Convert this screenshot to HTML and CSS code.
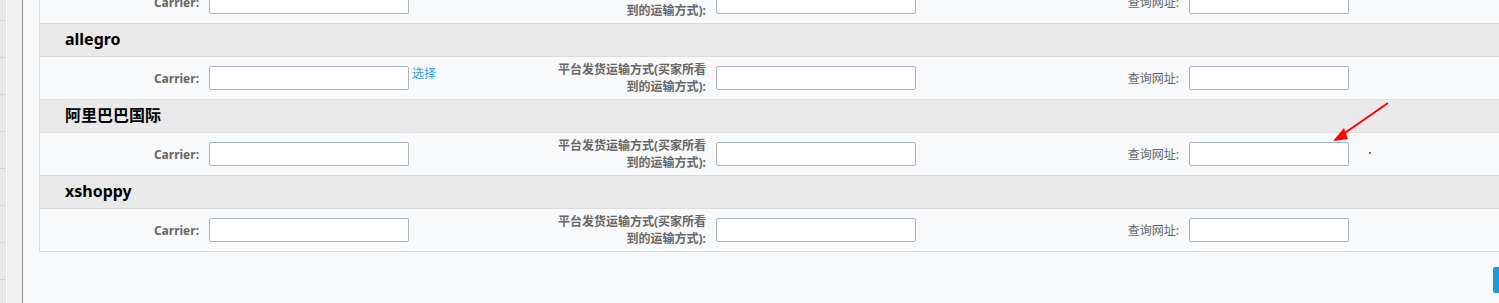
FILE: index.html
```html
<!DOCTYPE html>
<html lang="zh-CN">
<head>
<meta charset="utf-8">
<title>Carrier mapping</title>
<link rel="stylesheet" href="styles.css">
</head>
<body>
<div class="app">
  <aside class="rail"><div class="rail-a"></div><div class="rail-gap"></div><div class="rail-b"></div><div class="rail-line"></div></aside>
  <main class="content">
    <section class="panel">
      <div class="row">
        <div class="label bold">Carrier:</div>
        <div class="field"><input class="inp" type="text"></div>
        <div class="label bold">平台发货运输方式(买家所看到的运输方式):</div>
        <div class="field"><input class="inp" type="text"></div>
        <div class="label">查询网址:</div>
        <div class="field"><input class="inp inp-sm" type="text"></div>
      </div>
      <div class="head">allegro</div>
      <div class="row">
        <div class="label bold">Carrier:</div>
        <div class="field"><input class="inp" type="text"><a class="pick">选择</a></div>
        <div class="label bold">平台发货运输方式(买家所看到的运输方式):</div>
        <div class="field"><input class="inp" type="text"></div>
        <div class="label">查询网址:</div>
        <div class="field"><input class="inp inp-sm" type="text"></div>
      </div>
      <div class="head">阿里巴巴国际</div>
      <div class="row">
        <div class="label bold">Carrier:</div>
        <div class="field"><input class="inp" type="text"></div>
        <div class="label bold">平台发货运输方式(买家所看到的运输方式):</div>
        <div class="field"><input class="inp" type="text"></div>
        <div class="label">查询网址:</div>
        <div class="field"><input class="inp inp-sm" type="text"></div>
      </div>
      <div class="head">xshoppy</div>
      <div class="row">
        <div class="label bold">Carrier:</div>
        <div class="field"><input class="inp" type="text"></div>
        <div class="label bold">平台发货运输方式(买家所看到的运输方式):</div>
        <div class="field"><input class="inp" type="text"></div>
        <div class="label">查询网址:</div>
        <div class="field"><input class="inp inp-sm" type="text"></div>
      </div>
    </section>
    <div class="footer"><button class="btn" type="button"></button></div>
  </main>
</div>
<svg class="annot" width="80" height="70" viewBox="0 0 80 70" aria-hidden="true">
  <line x1="73" y1="13" x2="24" y2="47" stroke="#ff0000" stroke-width="2"/>
  <polygon points="18,51 29,38 33,49" fill="#ff0000"/>
  <circle cx="55" cy="63" r="1" fill="#ff0000"/>
</svg>
</body>
</html>
```
FILE: styles.css
```css
html, body {
  margin: 0;
  padding: 0;
  height: 100%;
  overflow: hidden;
  background: #f7f8fa;
}
body {
  font-family: "Noto Sans", "Noto Sans CJK SC", sans-serif;
  color: #666;
  position: relative;
}
.app {
  display: flex;
  height: 303px;
}
.rail {
  display: flex;
  flex: 0 0 23px;
  height: 100%;
}
.rail-a {
  flex: 0 0 6px;
  background: repeating-linear-gradient(to bottom, #e8e8e8 0 36px, #d3d3d3 36px 37px);
  background-position: 0 -16px;
}
.rail-gap {
  flex: 0 0 1px;
  background: #ffffff;
}
.rail-b {
  flex: 0 0 15px;
  background: #f0f0f0;
}
.rail-line {
  flex: 0 0 1px;
  background: #8c8c8c;
}
.content {
  flex: 1;
  padding-left: 16px;
  min-width: 0;
}
.panel {
  margin-top: -20px;
  margin-right: -40px;
  border: 1px solid #dcdcdc;
  border-bottom: none;
}
.row {
  display: grid;
  grid-template-columns: 169px 347px 160px 313px 160px 1fr;
  align-items: center;
  height: 42px;
  background: #f8f9fb;
  border-bottom: 1px solid #dcdcdc;
}
.head {
  height: 30px;
  line-height: 30px;
  padding-bottom: 2px;
  background: #e9e9e9;
  border-bottom: 1px solid #dcdcdc;
  padding-left: 25px;
  font-size: 16px;
  font-weight: 700;
  color: #000;
}
.label {
  padding-right: 10px;
  text-align: right;
  font-size: 12px;
  line-height: 17px;
  color: #666;
}
.label.bold {
  font-weight: 700;
}
.field {
  display: flex;
  align-items: center;
}
.inp {
  box-sizing: border-box;
  width: 200px;
  height: 24px;
  margin: 0;
  border: 1px solid #aab2bd;
  border-radius: 2px;
  background: #fff;
  padding: 0 4px;
}
.inp-sm {
  width: 160px;
}
.pick {
  align-self: flex-start;
  margin-left: 3px;
  font-size: 12px;
  line-height: 16px;
  color: #2a9fd8;
  cursor: pointer;
}
.footer {
  display: flex;
  justify-content: flex-end;
  margin-top: 15px;
  margin-right: -54px;
}
.btn {
  width: 60px;
  height: 26px;
  border: none;
  border-radius: 2px;
  background: #1a9bd7;
  padding: 0;
}
.annot {
  position: absolute;
  left: 1315px;
  top: 90px;
}
```
